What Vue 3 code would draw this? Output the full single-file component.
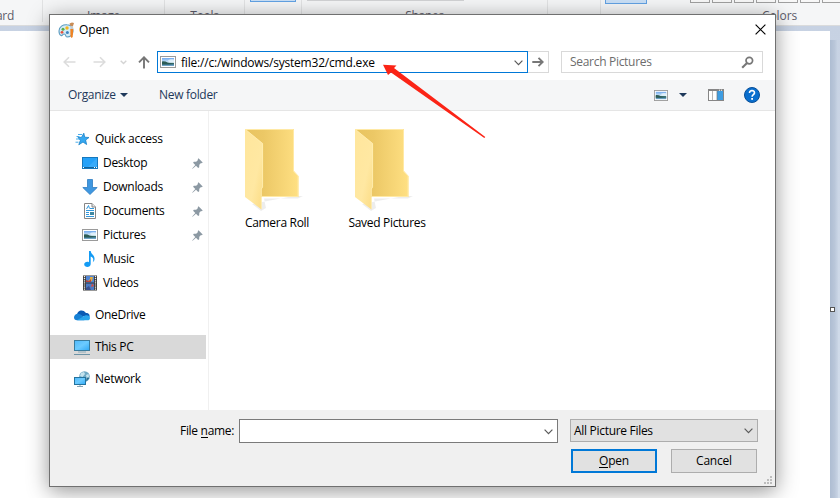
<script setup>
const quick = [
  { name: 'Desktop', icon: 'desktop', pin: true },
  { name: 'Downloads', icon: 'downloads', pin: true },
  { name: 'Documents', icon: 'documents', pin: true },
  { name: 'Pictures', icon: 'pictures', pin: true },
  { name: 'Music', icon: 'music', pin: false },
  { name: 'Videos', icon: 'videos', pin: false },
]
const folders = ['Camera Roll', 'Saved Pictures']
</script>

<template>
  <div class="screen">
    <svg class="defs" width="0" height="0">
      <defs>
        <linearGradient id="sky" x1="0" y1="0" x2="0" y2="1">
          <stop offset="0" stop-color="#6fa8ee" /><stop offset=".55" stop-color="#d8ecf8" />
          <stop offset=".62" stop-color="#3f7a78" /><stop offset=".8" stop-color="#4a84a0" /><stop offset="1" stop-color="#7fb0d6" />
        </linearGradient>
        <linearGradient id="blueScreen" x1="0" y1="0" x2="1" y2="1">
          <stop offset="0" stop-color="#4fb8fb" /><stop offset=".5" stop-color="#6ccbff" /><stop offset="1" stop-color="#2fa8f5" />
        </linearGradient>
        <linearGradient id="folderBack" x1="0" y1="0" x2="1" y2="0">
          <stop offset="0" stop-color="#e8c35f" /><stop offset=".35" stop-color="#ecc866" /><stop offset="1" stop-color="#ffe083" />
        </linearGradient>
        <linearGradient id="folderFront" x1="0" y1="0" x2="1" y2="1">
          <stop offset="0" stop-color="#ffe69c" /><stop offset=".6" stop-color="#ffe8a2" /><stop offset="1" stop-color="#fbdb83" />
        </linearGradient>
        <symbol id="photo" viewBox="0 0 16 12">
          <rect x=".5" y=".5" width="15" height="11" fill="#fff" stroke="#9a9a9a" />
          <rect x="2" y="2" width="12" height="8" fill="url(#sky)" />
          <path d="M2 5.400Q5 5 8 6.800L14 7.600V8L8 8.400H2Z" fill="#2c5c56" />
          <path d="M8 4.200Q11 2.600 14 3.600V6.500L9 6Z" fill="#e9f5fb" opacity=".8" />
        </symbol>
        <symbol id="chevron" viewBox="0 0 9 6"><path d="M.6 .7L4.5 4.6L8.4 .7" fill="none" stroke="#5a5a5a" stroke-width="1.2" /></symbol>
      </defs>
    </svg>

    <header class="ribbon">
      <section class="group g1"><span>ard</span></section>
      <section class="group g2"><span>Image</span></section>
      <section class="group g3"><span>Tools</span></section>
      <section class="group g4"><i class="hot brush"></i></section>
      <section class="group g5"><i class="gallery"></i><span>Shapes</span></section>
      <section class="group g6"></section>
      <section class="group g7">
        <i class="hot color"></i>
        <div class="swatches"><i v-for="n in 7" :key="n"></i></div>
        <span>Colors</span>
      </section>
    </header>
    <div class="workspace">
      <div class="paper"></div>
      <div class="gutter"><i class="handle"></i></div>
    </div>

    <div class="dialog">
      <div class="titlebar">
        <svg class="palette" width="17" height="17" viewBox="0 0 17 17">
          <path d="M1 9C1 4.500 5 2.500 9 2.800C13 3 15 5.500 15 9C15 13 12 15 9 15C7 15 8.500 12 6 12C4.500 12 4.500 14.200 3 13.500C1.500 12.800 1 11 1 9Z" fill="#d3ecf8" stroke="#5d9cc0" stroke-width="1.100" />
          <circle cx="9" cy="6" r="1.700" fill="#f4b51f" /><circle cx="5" cy="7.300" r="1.500" fill="#58ad4b" />
          <circle cx="4" cy="10.300" r="1.400" fill="#e6503c" /><circle cx="9.400" cy="10.600" r="1.500" fill="#3e83bf" />
          <path d="M12.300 7H15.300L14.700 15L13.500 16L12.500 14.500Z" fill="#f08322" />
          <path d="M12.600 4H15L15.300 7H12.300Z" fill="#c3cbd0" /><path d="M11.500 1.500L14 .6L16 1L15 4H12.600Z" fill="#c98c56" />
        </svg>
        <span class="title">Open</span>
        <svg class="close" width="11" height="11" viewBox="0 0 11 11"><path d="M.6 .6L10.400 10.400M10.400 .6L.6 10.400" stroke="#000" stroke-width="1.150" /></svg>
      </div>

      <div class="nav">
        <svg class="back" width="13" height="12" viewBox="0 0 13 12"><path d="M12.500 6H1.500M6 1.200L1.200 6L6 10.800" fill="none" stroke="#dcdcdc" stroke-width="1.600" /></svg>
        <svg class="forward" width="13" height="12" viewBox="0 0 13 12"><path d="M.5 6H11.500M7 1.200L11.800 6L7 10.800" fill="none" stroke="#dcdcdc" stroke-width="1.600" /></svg>
        <svg class="recent" width="7" height="5" viewBox="0 0 7 5"><path d="M.7 .8L3.500 3.600L6.300 .8" fill="none" stroke="#d4d4d4" stroke-width="1.400" /></svg>
        <svg class="up" width="12" height="13" viewBox="0 0 12 13"><path d="M6 12.500V1.500M1 6.300L6 1.300L11 6.300" fill="none" stroke="#767676" stroke-width="1.900" /></svg>
        <div class="address">
          <svg width="16" height="12"><use href="#photo" /></svg>
          <span class="url">file://c:/windows/system32/cmd.exe</span>
          <svg class="drop" width="9" height="6"><use href="#chevron" /></svg>
        </div>
        <div class="go"><svg width="12" height="10" viewBox="0 0 12 10"><path d="M.3 5H10.500M6.500 .8L10.700 5L6.500 9.200" fill="none" stroke="#777" stroke-width="1.900" /></svg></div>
        <div class="search">
          <span>Search Pictures</span>
          <svg width="13" height="13" viewBox="0 0 13 13"><circle cx="8.300" cy="4.600" r="3.300" fill="none" stroke="#777" stroke-width="1.700" /><path d="M6 7L1.200 11.800" stroke="#777" stroke-width="2.100" /></svg>
        </div>
      </div>

      <div class="toolbar">
        <span class="organize">Organize</span>
        <i class="tri"></i>
        <span class="newfolder">New folder</span>
        <svg class="view" width="14" height="11" viewBox="0 0 16 12" preserveAspectRatio="none"><use href="#photo" width="16" height="12" /></svg>
        <i class="tri view-tri"></i>
        <svg class="pane" width="16" height="12" viewBox="0 0 16 12">
          <rect x=".5" y=".5" width="15" height="11" fill="#fff" stroke="#868686" /><path d="M1 1.500H15" stroke="#868686" /><path d="M4.500 2V11" stroke="#b8b8b8" />
          <rect x="9" y="2" width="6" height="9" fill="#3e9de2" /><path d="M9 2V11" stroke="#777" stroke-width=".7" /><path d="M11 1.200h1m1 0h1" stroke="#fff" />
        </svg>
        <svg class="help" width="16" height="16" viewBox="0 0 16 16"><circle cx="8" cy="8" r="7.500" fill="#0a6fce" stroke="#084f98" />
          <path d="M5.500 6C5.500 2.700 10.600 3 10.500 5.900C10.400 7.700 8.100 7.700 8.100 9.800" fill="none" stroke="#fff" stroke-width="1.600" /><rect x="7.200" y="11" width="1.800" height="1.800" fill="#fff" /></svg>
      </div>

      <div class="body">
        <nav class="tree">
          <div class="row top">
            <svg width="16" height="16" viewBox="0 0 16 16">
              <path d="M9.800 2.200L10.700 6.200L15 6.500L11.600 9L12.600 13.500L9 11L4.800 13.800L6.400 9.300L4 6.600L7.700 6.200Z" fill="#35a8f1" stroke="#1780c8" stroke-width=".8" />
              <path d="M4 3.500H8M2.500 5.500H5.500M2 8H5.500M1.500 11.200H4.500" stroke="#4badea" stroke-width="1" />
            </svg><span>Quick access</span>
          </div>
          <div v-for="q in quick" :key="q.name" class="row sub">
            <svg v-if="q.icon === 'desktop'" width="16" height="16" viewBox="0 0 16 16">
              <rect x=".5" y="2.500" width="15" height="11" fill="#24a1f8" stroke="#1678bd" /><path d="M6 12L15 3V12Z" fill="#4cb5fc" opacity=".5" /><path d="M1 12.500H15" stroke="#126399" /><path d="M1 12.500h1m10 0h1m1 0h1" stroke="#fff" />
            </svg>
            <svg v-else-if="q.icon === 'downloads'" width="16" height="16" viewBox="0 0 16 16"><path d="M5.500 .5H10.500V8.500H15.200L8 15.500L.8 8.500H5.500Z" fill="#3f97e0" stroke="#2f7cc1" stroke-width=".8" /></svg>
            <svg v-else-if="q.icon === 'documents'" width="16" height="16" viewBox="0 0 16 16">
              <path d="M2.500 .5H10L13.500 4V15.500H2.500Z" fill="#fff" stroke="#868686" /><path d="M10 .5V4H13.500" fill="#e8e8e8" stroke="#868686" />
              <path d="M4.500 6L6.500 2.500L7.500 5.500M8 5.500H12M4 7.500H12M4 9.500H7M4 11.500H7M4 13.500H12" fill="none" stroke="#3298dc" /><rect x="8" y="9" width="4" height="3" fill="#4187a0" />
            </svg>
            <svg v-else-if="q.icon === 'pictures'" width="16" height="12"><use href="#photo" /></svg>
            <svg v-else-if="q.icon === 'music'" width="16" height="16" viewBox="0 0 16 16"><path d="M7 0H8.700C9 3.200 13 4.300 12.500 8.500C12.300 9.800 11.500 10.600 10.800 11.200C11.900 8 11 6.300 8.700 5.600V13C8.700 17 2.200 16.800 2.200 13.500C2.200 10.900 5.200 10.300 7 11.200Z" fill="#139bf4" /></svg>
            <svg v-else width="16" height="16" viewBox="0 0 16 16">
              <rect x="1" y=".5" width="14" height="15" fill="#343434" /><rect x="4" y="1" width="8" height="6.500" fill="#5185d4" /><rect x="4" y="8.500" width="8" height="6.500" fill="#4b7ac5" />
              <path d="M2.500 1V15M13.500 1V15" stroke="#f2f2f2" stroke-width="1.300" stroke-dasharray="1.200 .9" />
              <path d="M8 2L11 2L10 6L5 7L8 4Z" fill="#dfad43" /><path d="M4 5L7 6L9 4V7H4Z" fill="#b8433b" /><path d="M10 8.500L12 11L9 12Z" fill="#d94b3c" /><path d="M4 13L7 11L9 15H4Z" fill="#394f8c" />
            </svg>
            <span>{{ q.name }}</span>
            <svg v-if="q.pin" class="pin" width="11" height="11" viewBox="0 0 11 11"><path d="M6.500 .3L10.700 4.500L9.800 5.300L9 5L7.300 6.800L7.200 9.200L6.200 9.900L4 7.700L.6 10.800L.2 10.400L3.300 7L1.100 4.800L1.800 3.800L4.200 3.700L6 2L5.700 1.200Z" fill="#8c99a3" /></svg>
          </div>
          <div class="row top spaced">
            <svg width="16" height="16" viewBox="0 0 16 16"><path d="M3 8C3 4 8.500 1 12 6C15 6 16 8 15.500 10L8 9Z" fill="#0a5ab4" /><path d="M0 10.500C0 7 4 5.700 6.500 7.500L13 12L10 13.300H3C1 13.300 0 12 0 10.500Z" fill="#1681d5" /><path d="M3 13.300L11 8.600C13 7.500 16 8.600 16 11C16 12.400 15 13.300 13.500 13.300Z" fill="#29a5ec" /></svg>
            <span>OneDrive</span>
          </div>
          <div class="row top spaced selected">
            <svg width="16" height="16" viewBox="0 0 16 16"><rect x=".5" y="1.500" width="15" height="10" fill="url(#blueScreen)" stroke="#397b9d" /><path d="M4 13H12" stroke="#8babb9" /><path d="M0 15.500H16" stroke="#6d93a6" /></svg>
            <span>This PC</span>
          </div>
          <div class="row top spaced">
            <svg width="16" height="16" viewBox="0 0 16 16"><circle cx="10.500" cy="5.500" r="5.300" fill="#6fa9c4" /><path d="M7 2L10 1L11 3L8.500 6L6 5ZM12 4L14.500 3L15 5.500L13 8Z" fill="#c5e3ee" /><path d="M13 6.500L15.500 7L12 10.500Z" fill="#286d91" /><rect x=".5" y="6.500" width="11" height="7" fill="url(#blueScreen)" stroke="#24739e" /><path d="M6 14V15.500M3 15.500H9" stroke="#87a4b2" /></svg>
            <span>Network</span>
          </div>
        </nav>
        <main class="files">
          <figure v-for="f in folders" :key="f">
            <svg width="64" height="84" viewBox="0 0 64 84">
              <path d="M50 68H59L54 70.500H20L22 80L17 83L8 76Z" fill="#000" opacity=".07" />
              <path d="M1 1H50V43L54.500 48V69H1Z" fill="url(#folderBack)" />
              <path d="M1 1.500H49.500V43.300L54 48V68.500H18" fill="none" stroke="#ffe9a5" />
              <path d="M1 1L19 15.500V59L17.500 61V81.500L1 69Z" fill="url(#folderFront)" />
              <path d="M1.500 1.500L18.600 15.500V59L17.300 61V81" fill="none" stroke="#ffedb3" stroke-width=".8" />
            </svg>
            <figcaption>{{ f }}</figcaption>
          </figure>
        </main>
      </div>

      <footer class="footer">
        <div class="line">
          <label>File <u>n</u>ame:</label>
          <div class="field"><svg width="9" height="6"><use href="#chevron" /></svg></div>
          <div class="select"><span>All Picture Files</span><svg width="9" height="6"><use href="#chevron" /></svg></div>
        </div>
        <div class="actions">
          <button class="primary"><span><u>O</u>pen</span></button>
          <button><span class="cancel">Cancel</span></button>
        </div>
        <svg class="grip" width="8" height="8" viewBox="0 0 8 8"><path d="M6 0h2v2h-2zM3 3h2v2h-2zM6 3h2v2h-2zM0 6h2v2h-2zM3 6h2v2h-2zM6 6h2v2h-2z" fill="#bdbdbd" /></svg>
      </footer>
    </div>

    <svg class="pointer" width="104" height="76" viewBox="0 0 104 76"><path d="M0 .8L13.500 1.500L11 4L102.300 73L101.300 74L8 8.500L5 11Z" fill="#fb2416" /></svg>
  </div>
</template>

<style>
body { margin: 0; overflow: hidden; }
</style>
<style scoped>
* { box-sizing: border-box; }
.screen { position: relative; width: 840px; height: 498px; overflow: hidden; display: flex; flex-direction: column; background: #fff; font: 12px/16px "Open Sans", "Noto Sans", sans-serif; letter-spacing: -.3px; color: #000; }
.defs { position: absolute; }
svg { display: block; flex: none; }
span, label, figcaption { white-space: nowrap; }
.ribbon { height: 26px; flex: none; display: flex; background: #f5f6f7; border-bottom: 1px solid #dadbdc; color: #5d5d6b; }
.group { position: relative; height: 22px; border-right: 1px solid #e2e3e4; display: flex; justify-content: center; align-items: flex-end; flex: none; }
.group span { line-height: 16px; margin-bottom: -2px; }
.g1 { width: 43px; justify-content: flex-start; }
.g1 span { margin-left: -4px; }
.g2 { width: 122px; }
.g3 { width: 80px; }
.g4 { width: 57px; align-items: flex-start; }
.g5 { width: 246px; }
.g6 { width: 53px; }
.g7 { width: 239px; border: 0; justify-content: flex-start; }
.g7 > span { margin-left: 161px; letter-spacing: -.1px; }
.hot { background: #c9e0f7; border: 1px solid #62a2e4; border-top: 0; }
.brush { width: 46px; height: 2px; }
.color { position: absolute; left: 4px; top: 0; width: 42px; height: 4px; }
.gallery { position: absolute; left: 5px; top: 0; width: 157px; height: 1px; background: #d2d3d5; }
.swatches { position: absolute; left: 89px; top: 0; display: flex; gap: 2px; }
.swatches i { width: 20px; height: 3px; border: 1px solid #a0a0a0; border-top: 0; background: #f8f8f8; }
.workspace { flex: 1; padding-top: 5px; display: flex; background: linear-gradient(#c7d2e3, #d3deec); }
.paper { width: 830px; background: #fff; }
.gutter { position: relative; margin-top: 9px; width: 8px; background: linear-gradient(90deg, #aebdd2, #b9c6d9 55%, #c9d5e5); }
.handle { position: absolute; left: 0; top: 267px; width: 5px; height: 5px; background: #fff; border: 1px solid #555; }
.dialog { position: absolute; left: 49px; top: 14px; width: 727px; height: 473px; border: 1px solid #707070; background: #fff; display: flex; flex-direction: column; box-shadow: 0 4px 20px rgba(0,0,0,.42); }
.titlebar { height: 30px; display: flex; align-items: center; padding: 0 9px 0 8px; }
.title { margin-left: 4px; letter-spacing: -.15px; }
.close { margin-left: auto; margin-top: -2px; }
.nav { height: 35px; display: flex; align-items: center; padding: 0 12px 1px 13px; }
.forward { margin-left: 17px; }
.recent { margin-left: 14px; }
.up { margin-left: 11px; }
.address { margin-left: 7px; flex: none; width: 371px; height: 22px; border: 1px solid #0078d7; display: flex; align-items: center; padding: 0 4px 0 2px; }
.url { margin-left: 5px; margin-top: 1px; letter-spacing: -.2px; }
.drop { margin-left: auto; margin-top: 2px; }
.go { flex: none; width: 21px; height: 22px; border: 1px solid #d9d9d9; border-left: 0; display: grid; place-items: center; }
.search { margin-left: 12px; flex: none; width: 202px; height: 22px; border: 1px solid #d9d9d9; display: flex; align-items: center; justify-content: space-between; padding: 0 8px; color: #6d6d6d; }
.toolbar { height: 31px; flex: none; display: flex; align-items: center; padding: 0 15px 0 18px; background: #f5f6f7; border-bottom: 1px solid #e5e5e5; color: #1e395b; }
.tri { width: 0; border: 4px solid transparent; border-top-color: #1e395b; border-bottom: 0; }
.organize { width: 47px; }
.organize + .tri { margin-left: 5px; }
.newfolder { margin-left: 31px; }
.view { margin-left: auto; }
.view-tri { margin-left: 11px; }
.pane { margin-left: 21px; }
.help { margin-left: 20px; }
.body { height: 299px; flex: none; display: flex; }
.tree { width: 159px; border-right: 1px solid #f0f0f0; padding-top: 16px; flex: none; }
.row { height: 24px; width: 156px; display: flex; align-items: center; }
.top { padding-left: 24px; gap: 5px; }
.sub { padding-left: 32px; gap: 5px; }
.spaced { margin-top: 8px; }
.selected { background: #d9d9d9; }
.pin { margin-left: auto; margin-right: 3px; }
.files { display: flex; padding: 17px 0 0 13px; }
figure { margin: 0; width: 110px; display: flex; flex-direction: column; align-items: center; }
figcaption { margin-top: 3px; }
figure svg { margin-left: -2px; }
.footer { position: relative; flex: 1; background: #f0f0f0; padding: 9px 17px 0; }
.line { display: flex; align-items: center; height: 24px; }
label { width: 59px; margin-left: 113px; }
u { text-decoration: none; box-shadow: inset 0 -1px #000; display: inline-block; line-height: 15px; }
.field { width: 319px; height: 24px; background: #fff; border: 1px solid #7a7a7a; display: flex; align-items: center; justify-content: flex-end; padding-right: 4px; }
.field svg, .select svg { margin-top: 1px; }
.select { margin-left: 12px; width: 188px; height: 23px; margin-bottom: 1px; background: #e1e1e1; border: 1px solid #adadad; display: flex; align-items: center; justify-content: space-between; padding: 0 4px 0 3px; }
.actions { display: flex; justify-content: flex-end; gap: 14px; margin-top: 6px; padding-right: 1px; }
button { width: 86px; height: 24px; padding: 0; font: inherit; letter-spacing: -.2px; color: #000; background: #e1e1e1; border: 1px solid #adadad; border-radius: 0; display: grid; place-items: center; }
.primary { border: 2px solid #0078d7; }
.grip { position: absolute; right: 3px; bottom: 2px; }
.pointer { position: absolute; left: 383px; top: 64px; }
</style>
